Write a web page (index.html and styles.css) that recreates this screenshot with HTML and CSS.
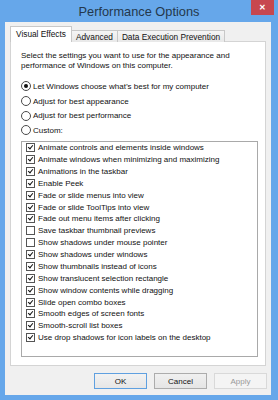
FILE: index.html
```html
<!DOCTYPE html>
<html>
<head>
<meta charset="utf-8">
<link rel="stylesheet" href="styles.css">
</head>
<body>
<div class="window">
  <div class="titlebar">
    <span></span>
    <span class="title">Performance Options</span>
    <span class="close">✕</span>
  </div>
  <div class="client">
    <div class="tabs">
      <div class="tab active">Visual Effects</div>
      <div class="tab">Advanced</div>
      <div class="tab">Data Execution Prevention</div>
    </div>
    <div class="panel">
      <p class="intro">Select the settings you want to use for the appearance and performance of Windows on this computer.</p>
      <div class="radios">
        <div class="radio-row"><span class="radio on"></span>Let Windows choose what’s best for my computer</div>
        <div class="radio-row"><span class="radio"></span>Adjust for best appearance</div>
        <div class="radio-row"><span class="radio"></span>Adjust for best performance</div>
        <div class="radio-row"><span class="radio"></span>Custom:</div>
      </div>
      <div class="list">
        <div class="item"><span class="cb on"></span>Animate controls and elements inside windows</div>
        <div class="item"><span class="cb on"></span>Animate windows when minimizing and maximizing</div>
        <div class="item"><span class="cb on"></span>Animations in the taskbar</div>
        <div class="item"><span class="cb on"></span>Enable Peek</div>
        <div class="item"><span class="cb on"></span>Fade or slide menus into view</div>
        <div class="item"><span class="cb on"></span>Fade or slide ToolTips into view</div>
        <div class="item"><span class="cb on"></span>Fade out menu items after clicking</div>
        <div class="item"><span class="cb"></span>Save taskbar thumbnail previews</div>
        <div class="item"><span class="cb"></span>Show shadows under mouse pointer</div>
        <div class="item"><span class="cb on"></span>Show shadows under windows</div>
        <div class="item"><span class="cb on"></span>Show thumbnails instead of icons</div>
        <div class="item"><span class="cb on"></span>Show translucent selection rectangle</div>
        <div class="item"><span class="cb on"></span>Show window contents while dragging</div>
        <div class="item"><span class="cb on"></span>Slide open combo boxes</div>
        <div class="item"><span class="cb on"></span>Smooth edges of screen fonts</div>
        <div class="item"><span class="cb on"></span>Smooth-scroll list boxes</div>
        <div class="item"><span class="cb on"></span>Use drop shadows for icon labels on the desktop</div>
      </div>
    </div>
    <div class="buttons">
      <button class="btn default">OK</button>
      <button class="btn">Cancel</button>
      <button class="btn disabled">Apply</button>
    </div>
  </div>
</div>
</body>
</html>
```

FILE: styles.css
```css
html, body {
  margin: 0;
  padding: 0;
  background: #66a7ea;
}
body {
  font-family: "Liberation Sans", Arial, sans-serif;
  color: #111;
}
.window {
  width: 278px;
  height: 400px;
  display: flex;
  flex-direction: column;
  background: #66a7ea;
}
.titlebar {
  height: 22px;
  display: grid;
  grid-template-columns: 1fr auto 1fr;
  align-items: start;
}
.title {
  font-family: "Liberation Sans", Arial, sans-serif;
  font-size: 12.8px;
  color: #24384c;
  line-height: 23px;
}
.close {
  justify-self: end;
  margin-right: 4px;
  width: 23px;
  height: 15px;
  background: #c7474f;
  color: #fff;
  font-size: 8px;
  font-weight: bold;
  line-height: 15px;
  text-align: center;
}
.client {
  margin: 0 7px 5px 5px;
  height: 373px;
  background: #f0f0f0;
  padding: 5px 4px 0 5px;
  box-sizing: border-box;
  display: flex;
  flex-direction: column;
}
.tabs {
  display: flex;
  align-items: flex-end;
  height: 15px;
  position: relative;
  z-index: 1;
  margin-bottom: -1px;
}
.tab {
  font-size: 8.3px;
  height: 12px;
  line-height: 12px;
  padding: 0 4px;
  border: 1px solid #c8c8c8;
  border-bottom: none;
  background: linear-gradient(#f5f5f5, #e8e8e8);
  box-sizing: border-box;
  margin-left: -1px;
}
.tab.active {
  height: 16px;
  line-height: 14px;
  background: #fff;
  margin-left: 0;
  padding: 0 5px;
  border-color: #c8c8c8;
}
.panel {
  height: 325px;
  margin-right: 1px;
  background: #fff;
  border: 1px solid #d4d4d4;
  box-sizing: border-box;
  padding: 9px 7px 0 10px;
  font-size: 8px;
}
.intro {
  margin: 0;
  line-height: 10px;
}
.radios {
  margin-top: 8px;
}
.radio-row {
  height: 14.7px;
  display: flex;
  align-items: center;
  gap: 2px;
}
.radio {
  width: 10px;
  height: 10px;
  border: 1px solid #4a4a4a;
  border-radius: 50%;
  box-sizing: border-box;
  background: #fff;
  display: flex;
  align-items: center;
  justify-content: center;
}
.radio.on::after {
  content: "";
  width: 4px;
  height: 4px;
  border-radius: 50%;
  background: #111;
}
.list {
  margin-top: 3px;
  height: 216px;
  border: 1px solid #a9a9a9;
  box-sizing: border-box;
  padding: 0 4px;
}
.item {
  height: 11.875px;
  display: flex;
  align-items: center;
  gap: 3px;
}
.cb {
  width: 9px;
  height: 9px;
  border: 1px solid #555;
  box-sizing: border-box;
  background: #fff;
  position: relative;
  flex: none;
}
.cb.on::after {
  content: "";
  position: absolute;
  left: 2px;
  top: 0px;
  width: 2px;
  height: 4px;
  border-right: 1.5px solid #111;
  border-bottom: 1.5px solid #111;
  transform: rotate(40deg);
}
.buttons {
  display: flex;
  justify-content: flex-end;
  gap: 7px;
  margin-top: 7px;
}
.btn {
  width: 53px;
  height: 16px;
  font-family: "Liberation Sans", Arial, sans-serif;
  font-size: 8px;
  color: #111;
  border: 1px solid #acacac;
  background: linear-gradient(#f0f0f0, #e5e5e5);
  padding: 0;
  margin: 0;
}
.btn.default {
  border-color: #5fa0e0;
  background: linear-gradient(#f2f2f2, #e6e6e6);
}
.btn.disabled {
  color: #9a9a9a;
  border-color: #d9d9d9;
  background: #f4f4f4;
}
```
